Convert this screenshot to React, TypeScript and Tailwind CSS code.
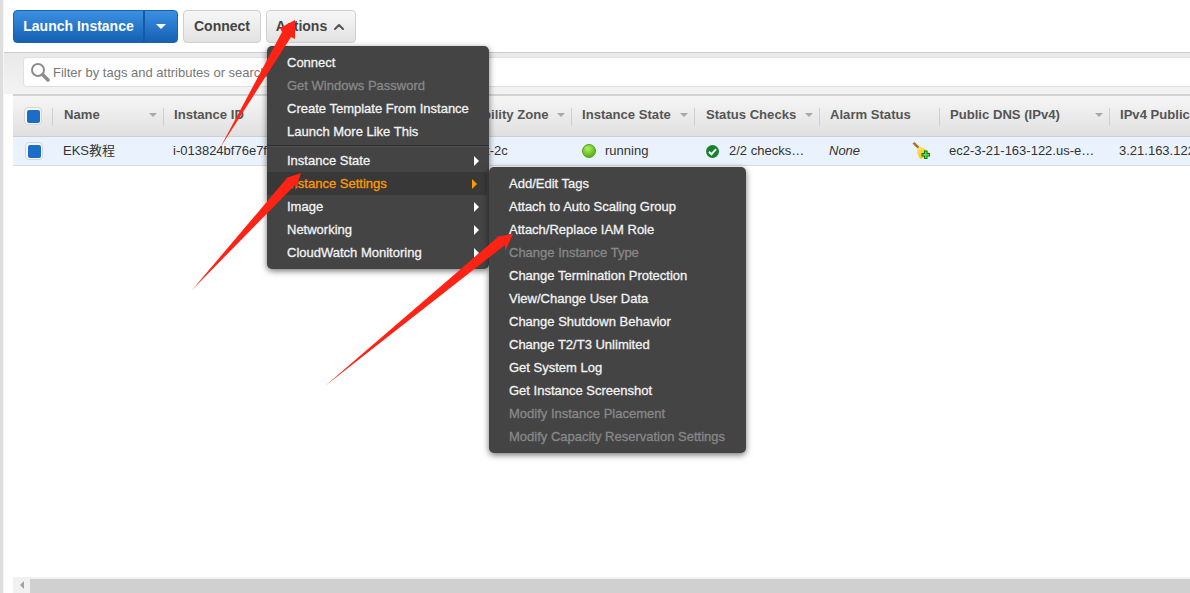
import { ChevronUp } from 'lucide-react'

const actionItems = [
  { label: 'Connect' },
  { label: 'Get Windows Password', disabled: true },
  { label: 'Create Template From Instance' },
  { label: 'Launch More Like This' },
]

const groupItems = [
  { label: 'Instance State' },
  { label: 'Instance Settings', active: true },
  { label: 'Image' },
  { label: 'Networking' },
  { label: 'CloudWatch Monitoring' },
]

const settingsItems = [
  { label: 'Add/Edit Tags' },
  { label: 'Attach to Auto Scaling Group' },
  { label: 'Attach/Replace IAM Role' },
  { label: 'Change Instance Type', disabled: true },
  { label: 'Change Termination Protection' },
  { label: 'View/Change User Data' },
  { label: 'Change Shutdown Behavior' },
  { label: 'Change T2/T3 Unlimited' },
  { label: 'Get System Log' },
  { label: 'Get Instance Screenshot' },
  { label: 'Modify Instance Placement', disabled: true },
  { label: 'Modify Capacity Reservation Settings', disabled: true },
]

function Checkbox() {
  return (
    <div className="flex h-[18px] w-[18px] items-center justify-center rounded-[4px] border border-[#d5d5d5] bg-[#f7f7f7]">
      <div className="h-[13px] w-[13px] rounded-[2px] bg-[#1b6ec8]" />
    </div>
  )
}

function HeaderCell({ label, width, sort = true }: { label: string; width: string; sort?: boolean }) {
  return (
    <div className={`relative flex h-full shrink-0 items-center pb-[2px] pr-[6px] ${width}`}>
      <div className="absolute left-0 top-[12px] h-[18px] w-px bg-[#cfcfcf]" />
      <span className="truncate text-[13.1px] font-bold text-[#555]">{label}</span>
      {sort && <div className="ml-auto h-0 w-0 shrink-0 border-x-[4px] border-t-[4px] border-x-transparent border-t-[#a8a8a8]" />}
    </div>
  )
}

function RowCell({ width, children, className = '' }: { width: string; children?: React.ReactNode; className?: string }) {
  return <div className={`flex h-full shrink-0 items-center pl-[10px] pr-[6px] ${width} ${className}`}>{children}</div>
}

function MenuRow({ label, disabled, active, submenu }: { label: string; disabled?: boolean; active?: boolean; submenu?: boolean }) {
  return (
    <div className={`flex h-[23px] items-center pl-5 pr-[10px] ${active ? 'mr-[2px] bg-[#383838] text-[#ff9900]' : disabled ? 'text-[#888]' : 'text-[#f2f2f2]'}`}>
      <span className="whitespace-nowrap text-[13px] [-webkit-text-stroke:0.3px_currentColor]">{label}</span>
      {submenu && (
        <div className={`ml-auto h-0 w-0 border-y-[5px] border-l-[5px] border-y-transparent ${active ? 'border-l-[#ff9900]' : 'border-l-white'}`} />
      )}
    </div>
  )
}

function Broom() {
  return (
    <svg width="19" height="20" viewBox="0 0 19 20">
      <defs>
        <linearGradient id="broomFill" x1="0" y1="0" x2="1" y2="1">
          <stop offset="0" stopColor="#ffe873" />
          <stop offset="1" stopColor="#f2b200" />
        </linearGradient>
      </defs>
      <path d="M0.5 2.5 L2.5 1 L8 6.5 L6 8 Z" fill="#a8741c" />
      <path d="M5 7.5 L8 5.5 C11 6.5 15 9 17 11.5 C15 14.5 11 17.5 8 18 C6 15 4.5 11 5 7.5 Z" fill="url(#broomFill)" />
      <path d="M12 9.5 H15.5 V12 H18 V15.5 H15.5 V18 H12 V15.5 H9.5 V12 H12 Z" fill="#0a7a12" />
      <path d="M13 10.5 H14.5 V13 H17 V14.5 H14.5 V17 H13 V14.5 H10.5 V13 H13 Z" fill="#5fe04a" />
    </svg>
  )
}

export default function App() {
  return (
    <div className="relative flex h-[593px] w-full overflow-hidden bg-white font-['Liberation_Sans','Noto_Sans_CJK_SC',sans-serif]">
      <div className="w-[3px] shrink-0 bg-[#dedede]" />
      <div className="w-px shrink-0 bg-[#f5f5f5]" />

      <div className="flex min-w-0 flex-1 flex-col">
        {/* Toolbar */}
        <div className="flex h-[52px] shrink-0 items-start gap-[5px] pl-[9px] pt-[10px]">
          <div className="flex h-[33px] w-[165px] overflow-hidden rounded-[4px] border border-[#1a62b0] bg-gradient-to-b from-[#3b90e2] to-[#1460b3]">
            <div className="flex flex-1 items-center justify-center border-r-2 border-[#1759a5] text-[14px] font-bold text-white">
              Launch Instance
            </div>
            <div className="flex w-[32px] items-center justify-center">
              <div className="h-0 w-0 border-x-[5px] border-t-[5px] border-x-transparent border-t-white" />
            </div>
          </div>
          <div className="flex h-[33px] w-[78px] items-center justify-center rounded-[4px] border border-[#d0d0d0] bg-gradient-to-b from-[#f7f7f7] to-[#e2e2e2] text-[14px] font-bold text-[#444]">
            Connect
          </div>
          <div className="flex h-[33px] w-[90px] items-center justify-center gap-[4px] rounded-[4px] border border-[#d0d0d0] bg-gradient-to-b from-[#f7f7f7] to-[#e2e2e2] pl-[1px] text-[14px] font-bold text-[#444]">
            Actions
            <ChevronUp className="h-[16px] w-[16px] text-[#555]" strokeWidth={3} />
          </div>
        </div>

        <div className="h-px shrink-0 bg-[#cccccc]" />

        {/* Filter bar */}
        <div className="flex h-[41px] shrink-0 flex-col bg-gradient-to-b from-[#e9e9e9] to-[#f3f3f3] pl-[9px]">
          <div className="ml-[10px] mt-[4px] flex h-[30px] items-center rounded-l-[4px] border border-r-0 border-[#e0e0e0] bg-white pl-[6px]">
            <svg width="20" height="20" viewBox="0 0 20 20" fill="none">
              <circle cx="8" cy="8" r="6" stroke="#8c8c8c" strokeWidth="2" />
              <path d="M12.5 12.5 L18 18" stroke="#8c8c8c" strokeWidth="3.5" strokeLinecap="round" />
            </svg>
            <span className="ml-[3px] whitespace-nowrap pt-[1px] text-[13px] text-[#777]">Filter by tags and attributes or search by keyword</span>
          </div>
        </div>

        <div className="ml-[9px] flex min-h-0 flex-1 flex-col overflow-hidden">
          {/* Table header */}
          <div className="flex h-[43px] shrink-0 items-center border-t-2 border-[#d2d2d2] bg-gradient-to-b from-[#f6f6f6] to-[#e0e0e0] border-b border-b-[#cfcfcf]">
            <div className="flex h-full w-[39px] shrink-0 items-center pl-[11px]">
              <Checkbox />
            </div>
            <HeaderCell label="Name" width="w-[111px] pl-[12px]" />
            <HeaderCell label="Instance ID" width="w-[149px] pl-[11px]" />
            <HeaderCell label="Instance Type" width="w-[121px] pl-[11px]" />
            <HeaderCell label="Availability Zone" width="w-[138px] pl-[12px]" />
            <HeaderCell label="Instance State" width="w-[123px] pl-[11px]" />
            <HeaderCell label="Status Checks" width="w-[125px] pl-[12px]" />
            <HeaderCell label="Alarm Status" width="w-[120px] pl-[11px]" sort={false} />
            <HeaderCell label="Public DNS (IPv4)" width="w-[170px] pl-[11px]" />
            <HeaderCell label="IPv4 Public IP" width="w-[120px] pl-[11px]" />
          </div>

          {/* Selected row */}
          <div className="flex h-[29px] shrink-0 items-center border-b border-[#dcdcdc] bg-[#eaf2fd] text-[13px] text-[#333]">
            <div className="flex h-full w-[39px] shrink-0 items-center pl-[12px]">
              <Checkbox />
            </div>
            <RowCell width="w-[111px]">
              <span className="ml-[1px]">EKS教程</span>
            </RowCell>
            <RowCell width="w-[149px]">i-013824bf76e7f4a2d</RowCell>
            <RowCell width="w-[121px]">t3.medium</RowCell>
            <RowCell width="w-[138px]">
              <span className="ml-[4px]">us-east-2c</span>
            </RowCell>
            <RowCell width="w-[123px]">
              <div className="ml-[1px] h-[14px] w-[14px] rounded-full border border-[#4e9e12] bg-[radial-gradient(circle_at_40%_30%,#b5ee63,#5cb818_70%)]" />
              <span className="ml-[9px]">running</span>
            </RowCell>
            <RowCell width="w-[125px]">
              <svg className="ml-[2px] shrink-0" width="13" height="13" viewBox="0 0 13 13">
                <circle cx="6.5" cy="6.5" r="6.5" fill="#17822d" />
                <path d="M3 6.8 L5.5 9.2 L10 4.2" fill="none" stroke="#fff" strokeWidth="2" />
              </svg>
              <span className="ml-[10px] max-w-[76px] truncate">2/2 checks passed</span>
            </RowCell>
            <RowCell width="w-[120px]" className="relative italic">
              None
              <div className="absolute left-[93px] top-[4px]">
                <Broom />
              </div>
            </RowCell>
            <RowCell width="w-[170px]">
              <span className="max-w-[146px] truncate">ec2-3-21-163-122.us-east-2.compute.amazonaws.com</span>
            </RowCell>
            <RowCell width="w-[120px]">3.21.163.122</RowCell>
          </div>

          {/* Scrollbar */}
          <div className="mt-auto flex h-[16px] shrink-0 bg-[#f1f1f1]">
            <div className="flex w-[17px] shrink-0 items-center justify-center">
              <div className="h-0 w-0 border-y-[4px] border-r-[4px] border-y-transparent border-r-[#a3a3a3]" />
            </div>
            <div className="mt-[2px] flex-1 bg-[#d0d0d0]" />
          </div>
        </div>
      </div>

      {/* Actions menu */}
      <div className="absolute left-[267px] top-[46px] w-[222px] rounded-[5px] bg-[#444] py-[5px] shadow-[0_2px_6px_rgba(0,0,0,0.55)]">
        {actionItems.map((item) => (
          <MenuRow key={item.label} {...item} />
        ))}
        <div className="my-[2px] h-[2px] border-t border-[#2c2c2c] bg-[#505050]" />
        {groupItems.map((item) => (
          <MenuRow key={item.label} {...item} submenu />
        ))}
      </div>

      {/* Instance Settings submenu */}
      <div className="absolute left-[489px] top-[167px] w-[257px] rounded-[5px] bg-[#444] py-[5px] shadow-[0_2px_6px_rgba(0,0,0,0.55)]">
        {settingsItems.map((item) => (
          <MenuRow key={item.label} {...item} />
        ))}
      </div>

      {/* Red annotation arrows */}
      <svg className="pointer-events-none absolute left-0 top-0" width="1190" height="593" viewBox="0 0 1190 593">
        <polygon points="220,148 282,32 280,28 295,20 295,39 291,37" fill="#fe2315" />
        <polygon points="192,290 287,178 283,179 301,173 295,191 295,185" fill="#fe2315" />
        <polygon points="325,386 498,237 495,237 513,234 505,251 505,245" fill="#fe2315" />
      </svg>
    </div>
  )
}
